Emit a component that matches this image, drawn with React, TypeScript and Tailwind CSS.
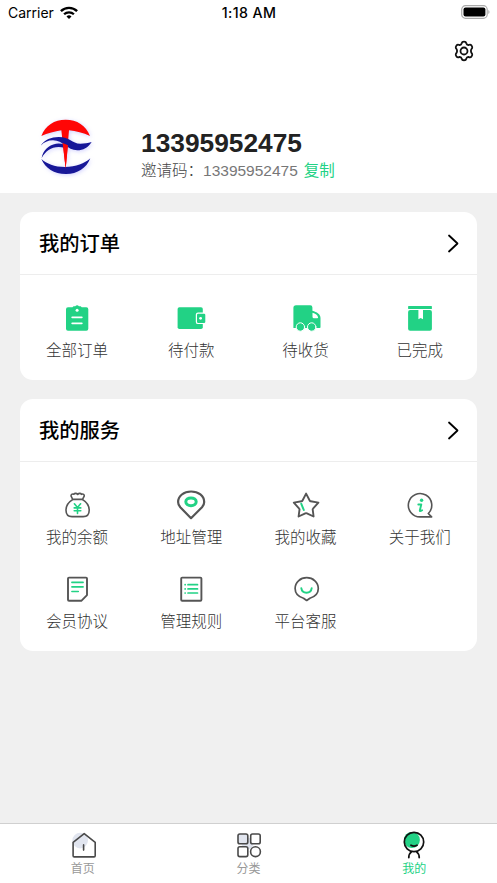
import type { ReactNode } from 'react';

const GREEN = '#22d285';
const DARK = '#555555';

function Icon({ children }: { children: ReactNode }) {
  return (
    <svg viewBox="0 0 30 30" className="block h-[30px] w-[30px]" fill="none" strokeLinecap="round" strokeLinejoin="round">
      {children}
    </svg>
  );
}

const OrdersIcon = () => (
  <Icon>
    <path fill={GREEN} d="M6 4.3h4.5l1-1h1.8a2.2 2.2 0 0 1 3.6 0h1.8l1 1H24.300a2 2 0 0 1 2 2v19.500a2 2 0 0 1-2 2H6a2 2 0 0 1-2-2V6.300a2 2 0 0 1 2-2z" />
    <circle cx="15.100" cy="7.300" r="1.500" fill="#fff" />
    <path stroke="#fff" strokeWidth="1.800" d="M10.200 14.300h9.600M10.200 20.300h9.600" />
  </Icon>
);

const WalletIcon = () => (
  <Icon>
    <rect x="1.600" y="4.300" width="25.200" height="21.700" rx="1.800" fill={GREEN} />
    <rect x="19.800" y="9.600" width="12" height="11.500" rx="2.200" fill="#fff" />
    <rect x="21" y="10.700" width="8.300" height="9.300" rx="1.200" fill={GREEN} />
    <circle cx="24.600" cy="15.300" r="1.400" fill="#fff" />
  </Icon>
);

const TruckIcon = () => (
  <Icon>
    <path fill={GREEN} d="M5 2.300h14.300a2.100 2.100 0 0 1 2.100 2.100v3.300c4.500 1.400 8.100 3.200 8.100 7.300v9.200q0 .8-.8.8H2.400V4.900Q2.400 2.300 5 2.300z" />
    <path fill="#fff" d="M21.500 9.800c3 .8 5.200 2.200 5.600 4.700q0 .8-.8.8h-3.300q-1.500 0-1.500-1.500z" />
    <circle cx="9.400" cy="24" r="4.200" fill={GREEN} stroke="#fff" strokeWidth="1" />
    <circle cx="20.700" cy="24" r="4.200" fill={GREEN} stroke="#fff" strokeWidth="1" />
  </Icon>
);

const BoxIcon = () => (
  <Icon>
    <rect x="3.100" y="3" width="23.800" height="3" rx=".5" fill={GREEN} />
    <path fill={GREEN} d="M3.100 9q0-2 2-2h19.800q2 0 2 2v16.800q0 2-2 2H5.100q-2 0-2-2z" />
    <path fill="#fff" d="M13.400 7H18v9.300l-2.300-1.300-2.300 1.300z" />
  </Icon>
);

const BalanceIcon = () => (
  <Icon>
    <g stroke={DARK} strokeWidth="1.600">
      <path d="M10.600 9.600C6.500 12 4 16 4 20.300c0 4 2.400 6.300 6 6.300h11.200c3.600 0 6-2.300 6-6.300 0-4.300-2.500-8.300-6.600-10.700" />
      <path d="M10.700 9.400h9.800l1.700-3.200c.5-1.500-1.200-2.700-2.700-1.900-.9-1.300-2.600-1.200-3.800.1-1.200-1.300-3-1.300-3.900-.1-1.600-.8-3.200.4-2.700 1.900z" />
    </g>
    <path stroke={GREEN} strokeWidth="1.600" d="m12.400 13.800 3.100 3.700 3.100-3.700M12.200 17.900h6.600M12.200 20.700h6.600M15.500 17.500v6" />
  </Icon>
);

const AddressIcon = () => (
  <Icon>
    <path stroke={DARK} strokeWidth="2.200" d="M15 28.200 4.300 17.300C2.900 15.700 2.100 13.900 2.100 11.900 2.100 6 7.800 1.500 15.100 1.500s13.100 4.500 13.100 10.400c0 2-.8 3.800-2.200 5.400z" />
    <ellipse cx="15" cy="11.800" rx="5.200" ry="3.900" stroke={GREEN} strokeWidth="3" />
  </Icon>
);

const FavouriteIcon = () => (
  <Icon>
    <path stroke={DARK} strokeWidth="1.900" d="m15.100 3.600 3.700 7.100q.3.500.9.600l7.700 1.300-5.400 6q-.4.400-.3 1l.9 6.900-6.700-3.200q-.8-.4-1.600 0l-6.700 3.200.9-6.900q.1-.6-.3-1l-5.400-6 7.700-1.300q.6-.1.900-.6z" />
    <path stroke={GREEN} strokeWidth="2" d="m10.300 13.800 2.500 6.200" />
  </Icon>
);

const AboutIcon = () => (
  <Icon>
    <path stroke={DARK} strokeWidth="1.600" d="M15.200 26.900A11.700 11.700 0 1 1 23.300 23.500L26.600 26.900z" />
    <circle cx="16.600" cy="10.300" r="1.700" fill={GREEN} />
    <path stroke={GREEN} strokeWidth="1.900" d="M13.300 14.500h3l-1.500 5.900q-.2 1.500 2.300-.2" />
  </Icon>
);

const AgreementIcon = () => (
  <Icon>
    <path stroke={DARK} strokeWidth="1.900" d="M7 3.600h17q1 0 1 1v16.500l-5.700 5.700H7q-1 0-1-1V4.600q0-1 1-1z" />
    <path stroke={GREEN} strokeWidth="1.600" d="M9.900 8.400h11.200M9.900 12.900h11.200M9.900 17.500h6.400" />
  </Icon>
);

const RulesIcon = () => (
  <Icon>
    <rect x="5.200" y="3.600" width="20.200" height="23.200" rx="1" stroke={DARK} strokeWidth="1.900" />
    <path stroke={GREEN} strokeWidth="1.700" d="M12 10.700h9.500M12 14.900h9.500M12 19h9.500M9.100 10.700h.1M9.100 14.900h.1M9.100 19h.1" />
  </Icon>
);

const SupportIcon = () => (
  <Icon>
    <path stroke={DARK} strokeWidth="1.700" d="M15.700 26.500 12.500 24.200C7.500 22.700 4.100 19.500 4.100 14.500c0-6.200 5.200-10.800 11.600-10.800s11.600 4.600 11.600 10.800c0 5-3.400 8.200-8.400 9.700z" />
    <path stroke={GREEN} strokeWidth="1.900" d="M10.300 14.200c.7 6 9.700 6 10.400 0" />
  </Icon>
);

const HomeIcon = () => (
  <Icon>
    <circle cx="12.200" cy="10.600" r="7.800" fill="#e1e5ef" />
    <path stroke="#4a4a4a" strokeWidth="1.600" d="M5.100 12.300 16.200 3.600l11 8.700V25.800q0 1.100-1.100 1.100H6.200q-1.100 0-1.100-1.100z" />
    <path stroke="#4a4a4a" strokeWidth="1.600" d="M15.600 14.900v5.200" />
  </Icon>
);

const CategoryIcon = () => (
  <Icon>
    <g stroke="#4a4a4a" strokeWidth="1.600">
      <circle cx="13.500" cy="13.500" r="6" fill="#e1e5ef" stroke="none" />
      <rect x="4" y="4" width="9.800" height="9.800" rx="1.800" fill="#e1e5ef" />
      <rect x="16.700" y="4" width="9.500" height="9.800" rx="1.800" fill="#fff" />
      <rect x="4" y="16.800" width="9.800" height="9.800" rx="1.800" fill="#fff" />
      <circle cx="21.500" cy="21.700" r="4.900" fill="#fff" />
    </g>
  </Icon>
);

const MineIcon = () => (
  <Icon>
    <circle cx="12.900" cy="10" r="8" fill={GREEN} />
    <circle cx="15" cy="12" r="9.700" stroke="#111" strokeWidth="1.700" />
    <path stroke="#111" strokeWidth="1.800" d="M12 15.300q3 1.700 6 0M9.800 27.500c0-2.500 1-4.400 2.600-5.600M20.200 27.500c0-2.500-1-4.400-2.600-5.600" />
  </Icon>
);

const Logo = () => (
  <svg viewBox="54 45 168 186" className="h-[62px] w-[56px] overflow-visible" style={{ filter: 'drop-shadow(1px 1px 2px rgba(100,100,255,.3))' }}>
    <path fill="#ff0606" d="M64 108C76 76 103 59 137 59s61 17 73 49C190 99 168 93 147 91L137 206 124 91C104 94 83 100 64 108z" />
    <g fill="#171798">
      <path d="M62 137C74 119 94 111 116 111c34 0 39 20 65 20 12 0 23-2 34-5-11 17-26 25-43 25-31 0-42-30-73-30-15 0-27 6-37 16z" />
      <path d="M65 174c3-22 20-39 43-43q13-2 26 3l-1 9c-34-7-54 7-68 31z" />
      <path d="M64 177c16 14 39 24 71 24 34 0 58-10 76-26-12 30-38 47-73 47-36 0-62-17-74-45z" />
    </g>
    <path fill="#ff0606" d="M128 129l16 7-7 70z" />
  </svg>
);

function StatusBar() {
  return (
    <div className="grid h-[26px] grid-cols-3 items-center pl-[8px] pr-[7px] font-['Inter','Liberation_Sans',sans-serif] text-black">
      <div className="flex items-center gap-[6px] text-[14px] leading-[26px]">
        <span>Carrier</span>
        <svg viewBox="0 0 18 13" className="mb-[2px] h-[13px] w-[18px]" fill="none" stroke="#000">
          <path strokeWidth="2.400" d="M.9 5.200a11.500 11.500 0 0 1 16.200 0" />
          <path strokeWidth="2.300" d="M4.100 8.300a7 7 0 0 1 9.800 0" />
          <path fill="#000" stroke="none" d="M9 13 6.500 10.500a3.600 3.600 0 0 1 5 0z" />
        </svg>
      </div>
      <div className="whitespace-nowrap text-center text-[14.200px] font-medium leading-[26px] tracking-[0.400px]">1:18 AM</div>
      <svg viewBox="0 0 30 14" className="mb-[2px] h-[14px] w-[30px] justify-self-end">
        <rect x="1.700" y=".7" width="25.500" height="12.600" rx="3.800" fill="none" stroke="#aaa" strokeWidth="1.200" />
        <rect x="3.500" y="2.400" width="21.900" height="9.200" rx="2" />
        <path fill="#aaa" d="M28.300 5q1.200.5 1.200 2t-1.200 2z" />
      </svg>
    </div>
  );
}

function Section({ title, children }: { title: string; children: ReactNode }) {
  return (
    <section className="rounded-[13px] bg-white">
      <div className="flex h-[63px] items-center justify-between border-b border-[#ededed] pl-[19px] pr-[18px] pt-[1px]">
        <h2 className="text-[20.300px] font-medium leading-[30px] text-black">{title}</h2>
        <svg viewBox="0 0 12 20" className="h-[20px] w-[12px]" fill="none" stroke="#000" strokeWidth="1.800" strokeLinecap="round" strokeLinejoin="round">
          <path d="m2 1.500 8.500 8-8.500 8" />
        </svg>
      </div>
      <div className="grid grid-cols-4">{children}</div>
    </section>
  );
}

function Entry({ icon, label }: { icon: ReactNode; label: string }) {
  return (
    <div className="flex h-[84px] flex-col items-center">
      {icon}
      <span className="mt-[6px] text-[15.500px] font-light leading-[24px] text-[#333]">{label}</span>
    </div>
  );
}

function Tab({ icon, label, active = false }: { icon: ReactNode; label: string; active?: boolean }) {
  return (
    <div className={`flex flex-1 flex-col items-center pt-[6px] text-[12px] leading-[16px] ${active ? 'text-[#22d285]' : 'text-[#999]'}`}>
      {icon}
      <span className="mt-[1px]">{label}</span>
    </div>
  );
}

export default function App() {
  return (
    <div className="flex h-[883px] w-[497px] flex-col overflow-hidden bg-[#f0f0f0] font-['Liberation_Sans','Noto_Sans_CJK_SC',sans-serif]">
      <header className="h-[193px] bg-white">
        <StatusBar />
        <div className="flex h-[50px] items-center justify-end pr-[22px]">
          <svg viewBox="0 0 22 22" className="h-[22px] w-[22px]" fill="none" stroke="#111" strokeWidth="1.800" strokeLinejoin="round">
            <path d="M8.700 3.200Q9 1.700 11 1.700t2.300 1.500q.4 1.700 2 1.900 2.200-1 3.200.4 1.200 1.700.6 2.700-1.200 1.300-1.200 2.800t1.200 2.800q.6 1-.6 2.700-1 1.400-3.200.4-1.600.2-2 1.900-.3 1.500-2.300 1.500t-2.300-1.500q-.4-1.700-2-1.900-2.200 1-3.200-.4-1.200-1.700-.6-2.700Q4.100 12.500 4.100 11T2.900 8.200q-.6-1 .6-2.700 1-1.400 3.200-.4 1.600-.2 2-1.900z" />
            <circle cx="11" cy="11" r="3.500" />
          </svg>
        </div>
        <div className="flex pl-[38px] pt-[39px]">
          <Logo />
          <div className="ml-[47px] pt-[13px]">
            <div className="text-[26.300px] font-bold leading-[31px] text-[#222]">13395952475</div>
            <div className="flex text-[15.500px] leading-[24px] text-[#777]">
              <span className="font-light text-[#444]">邀请码：</span>
              <span>13395952475</span>
              <span className="ml-[6px] text-[#22d285]">复制</span>
            </div>
          </div>
        </div>
      </header>

      <main className="flex flex-1 flex-col gap-[19px] px-[20px] pt-[19px]">
        <Section title="我的订单">
          <div className="col-span-4 grid h-[105px] grid-cols-4 pt-[28px]">
            <Entry icon={<OrdersIcon />} label="全部订单" />
            <Entry icon={<WalletIcon />} label="待付款" />
            <Entry icon={<TruckIcon />} label="待收货" />
            <Entry icon={<BoxIcon />} label="已完成" />
          </div>
        </Section>
        <Section title="我的服务">
          <div className="col-span-4 grid h-[189px] auto-rows-[84px] grid-cols-4 pt-[28px]">
            <Entry icon={<BalanceIcon />} label="我的余额" />
            <Entry icon={<AddressIcon />} label="地址管理" />
            <Entry icon={<FavouriteIcon />} label="我的收藏" />
            <Entry icon={<AboutIcon />} label="关于我们" />
            <Entry icon={<AgreementIcon />} label="会员协议" />
            <Entry icon={<RulesIcon />} label="管理规则" />
            <Entry icon={<SupportIcon />} label="平台客服" />
          </div>
        </Section>
      </main>

      <nav className="flex h-[60px] border-t border-[#d0d0d0] bg-white">
        <Tab icon={<HomeIcon />} label="首页" />
        <Tab icon={<CategoryIcon />} label="分类" />
        <Tab icon={<MineIcon />} label="我的" active />
      </nav>
    </div>
  );
}
